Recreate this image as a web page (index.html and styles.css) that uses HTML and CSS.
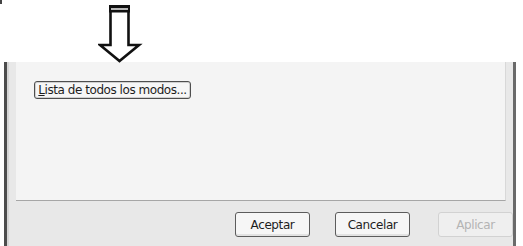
FILE: index.html
```html
<!DOCTYPE html>
<html lang="es">
<head>
<meta charset="utf-8">
<title>Opciones</title>
<link rel="stylesheet" href="styles.css">
</head>
<body>
<div class="top">
  <span class="corner"></span>
  <svg class="arrow" width="46" height="64" viewBox="0 0 46 64">
    <path d="M12.5 12 V45 H2 L21.5 61 L41 45 H30.5 V12" fill="#fff" stroke="#111" stroke-width="2.6" stroke-linejoin="miter"/>
    <rect x="11" y="5" width="21" height="7.5" fill="#111"/>
    <rect x="13" y="8.3" width="17" height="1.4" fill="#fff"/>
  </svg>
</div>
<div class="dialog">
  <div class="panel">
    <button class="btn list"><u>L</u>ista de todos los modos...</button>
  </div>
  <div class="actions">
    <button class="btn action">Aceptar</button>
    <button class="btn action">Cancelar</button>
    <button class="btn action disabled">Aplicar</button>
  </div>
</div>
</body>
</html>
```
FILE: styles.css
```css
html, body {
  margin: 0;
  padding: 0;
  background: #fff;
  width: 523px;
  height: 246px;
  overflow: hidden;
  font-family: "DejaVu Sans", "Liberation Sans", sans-serif;
  font-size: 12px;
  color: #1e1e1e;
}

.top {
  height: 62px;
  display: flex;
  align-items: flex-start;
  padding-left: 98px;
  position: relative;
}

.corner {
  position: absolute;
  left: 0;
  top: 0;
  width: 2px;
  height: 4px;
  background: #444;
}

.arrow {
  display: block;
}

.dialog {
  margin: 0 7px 0 4px;
  height: 184px;
  border-left: 3px solid #4d4d4d;
  border-right: 3px solid #6a6a6a;
  background: #e8e8e8;
  display: flex;
  flex-direction: column;
  box-shadow: inset 2px 0 0 #d6d6d6;
}

.panel {
  margin: 0 7px 0 9px;
  height: 139px;
  background: #f4f4f4;
  border-right: 1px solid #d8d8d8;
  border-bottom: 1px solid #a6a6a6;
  padding: 19px 0 0 18px;
  box-sizing: border-box;
}

.btn {
  font-family: inherit;
  font-size: 12px;
  color: #1e1e1e;
  background: #f6f6f6;
  border: 1px solid #4e4e4e;
  border-radius: 3px;
  padding: 0;
  margin: 0;
  display: flex;
  align-items: center;
  justify-content: center;
  box-sizing: border-box;
}

.list {
  width: 157px;
  height: 18px;
  letter-spacing: -0.45px;
  box-shadow: inset 0 0 0 1px #d0d0d0;
}

.list u {
  text-decoration-thickness: 1px;
}

.actions {
  flex: 1;
  display: flex;
  justify-content: flex-end;
  align-items: flex-start;
  gap: 25px;
  padding: 11px 0 0 0;
}

.action {
  width: 75px;
  height: 25px;
  border-color: #5c5c5c;
  letter-spacing: -0.4px;
  box-shadow: inset 0 -2px 0 #e2e2e2;
}

.action:nth-child(2) {
  margin-right: 3px;
}

.disabled {
  color: #b4b4b4;
  border-color: #d2d2d2;
  background: #efefef;
  box-shadow: none;
}
```
